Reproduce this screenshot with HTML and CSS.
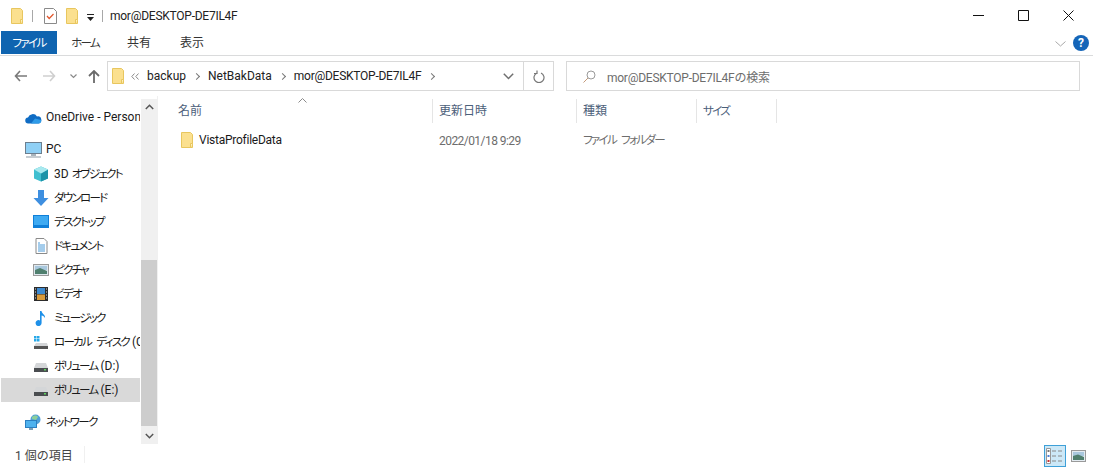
FILE: index.html
```html
<!DOCTYPE html>
<html lang="ja">
<head>
    <meta charset="UTF-8">
    <title>mor@DESKTOP-DE7IL4F</title>
    <link rel="stylesheet" href="styles.css">
</head>
<body>
    <svg class="defs" width="0" height="0">
        <symbol id="folder" viewBox="0 0 12 16">
            <path d="M.5 .5h9l2 2v13H.5z" fill="#fbe08f" stroke="#e8c65e"/>
            <path d="M11.500 11.500h-2v4" fill="#fff3c4" stroke="#e8c65e"/>
        </symbol>
        <symbol id="drive" viewBox="0 0 16 16">
            <path d="M1 10l2-5h10l2 5z" fill="#d4d6d8"/>
            <rect x="1" y="10" width="14" height="4" fill="#4a4d50"/>
            <rect x="11" y="11" width="2" height="1.500" fill="#5fd35f"/>
        </symbol>
    </svg>

    <!-- Title bar -->
    <div class="titlebar">
        <svg class="qa-icon" width="12" height="16"><use href="#folder"/></svg>
        <span class="qa-sep"></span>
        <svg class="qa-check" width="13" height="16" viewBox="0 0 13 16">
            <path d="M.5 .5h9l3 3v12H.5z" fill="#fff" stroke="#8a8a8a"/>
            <path d="M3 8l2.200 2.500L9.500 6" fill="none" stroke="#e2552b" stroke-width="1.200"/>
        </svg>
        <svg class="qa-icon qa-folder2" width="12" height="16"><use href="#folder"/></svg>
        <svg class="qa-drop" width="7" height="7" viewBox="0 0 7 7"><path d="M0 0h7v1H0zM0 3h7L3.500 7z" fill="#222"/></svg>
        <span class="qa-sep qa-sep2"></span>
        <span class="title-text tight">mor@DESKTOP-DE7IL4F</span>
        <div class="window-btns">
            <svg width="11" height="11" viewBox="0 0 11 11"><path d="M0 5.500h11" stroke="#111"/></svg>
            <svg width="11" height="11" viewBox="0 0 11 11"><path d="M.5 .5h10v10H.5z" fill="none" stroke="#111"/></svg>
            <svg width="11" height="11" viewBox="0 0 11 11"><path d="M.5 .5l10 10M10.500 .5l-10 10" stroke="#111"/></svg>
        </div>
    </div>

    <!-- Ribbon tabs -->
    <div class="ribbon">
        <div class="tab tab-file kana">ファイル</div>
        <div class="tab tab-home kana">ホーム</div>
        <div class="tab tab-share">共有</div>
        <div class="tab tab-view">表示</div>
        <svg class="ribbon-chevron" width="11" height="6" viewBox="0 0 11 6"><path d="M.5 .5l5 4.500 5-4.500" fill="none" stroke="#a8a8a8"/></svg>
        <div class="help">?</div>
    </div>

    <!-- Address row -->
    <div class="navrow">
        <div class="nav-btns">
            <svg width="13" height="12" viewBox="0 0 13 12"><path d="M6 1L1.500 6 6 11M1.500 6H13" fill="none" stroke="#7a7a7a" stroke-width="1.600"/></svg>
            <svg class="nav-forward" width="13" height="12" viewBox="0 0 13 12"><path d="M7 1l4.500 5L7 11M11.500 6H0" fill="none" stroke="#cfcfcf" stroke-width="1.600"/></svg>
            <svg class="nav-recent" width="7" height="5" viewBox="0 0 7 5"><path d="M.5 .5l3 3 3-3" fill="none" stroke="#8a8a8a" stroke-width="1.200"/></svg>
            <svg class="nav-up" width="12" height="13" viewBox="0 0 12 13"><path d="M1 6l5-5 5 5M6 1v12" fill="none" stroke="#6a6a6a" stroke-width="1.800"/></svg>
        </div>
        <div class="addressbox">
            <svg class="addr-folder" width="12" height="16"><use href="#folder"/></svg>
            <svg class="crumb-more" width="8" height="7" viewBox="0 0 8 7"><path d="M3.500 .5L.8 3.500l2.700 3M7.500 .5L4.800 3.500l2.700 3" fill="none" stroke="#8a8a8a"/></svg>
            <span class="crumb">backup</span>
            <span class="crumb-sep"></span>
            <span class="crumb">NetBakData</span>
            <span class="crumb-sep"></span>
            <span class="crumb tight">mor@DESKTOP-DE7IL4F</span>
            <span class="crumb-sep"></span>
            <svg class="addr-drop" width="11" height="7" viewBox="0 0 11 7"><path d="M.8 .8l4.700 4.700L10.200 .8" fill="none" stroke="#6f6f6f" stroke-width="1.500"/></svg>
            <div class="addr-refresh">
                <svg width="12" height="13" viewBox="0 0 12 13"><path d="M4 3a5 5 0 1 0 4 0M4 .5V3.500H1" fill="none" stroke="#777" stroke-width="1.200"/></svg>
            </div>
        </div>
        <div class="searchbox">
            <svg width="13" height="13" viewBox="0 0 13 13"><circle cx="8" cy="5" r="4" fill="none" stroke="#9a9a9a"/><path d="M5 8l-4.500 4.500" stroke="#c49a7a"/></svg>
            <span class="tight">mor@DESKTOP-DE7IL4Fの検索</span>
        </div>
    </div>

    <div class="main">
        <!-- Navigation pane -->
        <div class="sidebar">
            <div class="tree">
                <div class="row top">
                    <svg width="17" height="11" viewBox="0 0 17 11"><path d="M3.500 10.500a3 3 0 0 1-.5-6A5 5 0 0 1 12 3.500a3.500 3.500 0 0 1 1.500 7z" fill="#0f6cc4"/><path d="M6 10.500l4-5 6 1.500a2.500 2.500 0 0 1-2 3.500z" fill="#2f9be8"/></svg>
                    <span>OneDrive - Personal</span>
                </div>
                <div class="row top gap">
                    <svg width="17" height="16" viewBox="0 0 17 16"><rect x=".5" y=".5" width="16" height="11" fill="#8fd0f5" stroke="#6c7f8f"/><path d="M6 12h5v2H6z" fill="#a9b4bc"/><path d="M1 15h15" stroke="#8c99a3"/></svg>
                    <span>PC</span>
                </div>
                <div class="row sub">
                    <svg width="16" height="16" viewBox="0 0 16 16"><path d="M8 .5l7 3v9l-7 3-7-3v-9z" fill="#3fbfd0"/><path d="M8 7.500l7-4v9l-7 3z" fill="#1b93a8"/><path d="M8 .5l7 3-7 4-7-4z" fill="#a8e9ef"/></svg>
                    <span>3D <span class="kana">オブジェクト</span></span>
                </div>
                <div class="row sub">
                    <svg width="16" height="16" viewBox="0 0 16 16"><path d="M5 0h6v8h4.500L8 16 .5 8H5z" fill="#3e8fe0"/></svg>
                    <span class="kana">ダウンロード</span>
                </div>
                <div class="row sub">
                    <svg width="16" height="16" viewBox="0 0 16 16"><rect y="1" width="16" height="13" fill="#0f7fd8"/><path d="M1 2h14v9H1z" fill="#3eaaf2"/></svg>
                    <span class="kana">デスクトップ</span>
                </div>
                <div class="row sub">
                    <svg width="16" height="16" viewBox="0 0 16 16"><path d="M3 .5h8l3 3v12H3z" fill="#fff" stroke="#8a8a8a"/><path d="M5 5h2M5 7h7M5 9h7M5 11h7M5 13h7" stroke="#4a9ad8"/></svg>
                    <span class="kana">ドキュメント</span>
                </div>
                <div class="row sub">
                    <svg width="16" height="16" viewBox="0 0 16 16"><rect x=".5" y="2.500" width="15" height="11" fill="#dfe8ee" stroke="#9a9a9a"/><path d="M2 4h12v4H2z" fill="#a9c8de"/><path d="M2 8l5-2 7 3v3H2z" fill="#4f7f6e"/></svg>
                    <span class="kana">ピクチャ</span>
                </div>
                <div class="row sub">
                    <svg width="16" height="16" viewBox="0 0 16 16"><rect x="1" y="1" width="14" height="14" fill="#2c2c2c"/><rect x="4" y="2" width="8" height="6" fill="#3d8ad0"/><rect x="4" y="8.500" width="8" height="5.500" fill="#d99a3a"/><path d="M2 3h1M2 6h1M2 9h1M2 12h1M13 3h1M13 6h1M13 9h1M13 12h1" stroke="#ddd"/></svg>
                    <span class="kana">ビデオ</span>
                </div>
                <div class="row sub">
                    <svg width="16" height="16" viewBox="0 0 16 16"><path d="M7 1h1.500c.5 3 4 3.500 3.500 7-.8-1.500-2-2.300-3.400-2.500V13a3 3 0 1 1-1.600-2.600z" fill="#1e90e8"/></svg>
                    <span class="kana">ミュージック</span>
                </div>
                <div class="row sub">
                    <svg width="16" height="16" viewBox="0 0 16 16"><path d="M1 2h2.500v2.500H1zM4 2h2.500v2.500H4zM1 5h2.500v2.500H1zM4 5h2.500v2.500H4z" fill="#27a8e8"/><path d="M3 9h11l1 3H1z" fill="#d4d6d8"/><rect x="1" y="12" width="14" height="3" fill="#555"/></svg>
                    <span><span class="kana">ローカル ディスク</span> (C:)</span>
                </div>
                <div class="row sub">
                    <svg width="16" height="16"><use href="#drive"/></svg>
                    <span><span class="kana">ボリューム</span> (D:)</span>
                </div>
                <div class="row sub selected">
                    <svg width="16" height="16"><use href="#drive"/></svg>
                    <span><span class="kana">ボリューム</span> (E:)</span>
                </div>
                <div class="row top gap">
                    <svg width="17" height="16" viewBox="0 0 17 16"><circle cx="10.500" cy="5.500" r="5" fill="#4f9fd8"/><path d="M7 3c2-2 5-2 6 0l-2 3-4-1z" fill="#8ccf9a"/><rect x=".5" y="6.500" width="11" height="7" fill="#4fb2ee" stroke="#2c7fc0"/><path d="M4 15h4" stroke="#7f9fb5" stroke-width="2"/></svg>
                    <span class="kana">ネットワーク</span>
                </div>
            </div>
            <div class="scrollbar">
                <svg class="scroll-arrow" width="9" height="6" viewBox="0 0 9 6"><path d="M.8 5L4.500 1.300 8.200 5" fill="none" stroke="#555" stroke-width="1.500"/></svg>
                <div class="scroll-space"></div>
                <div class="scroll-thumb"></div>
                <svg class="scroll-arrow" width="9" height="6" viewBox="0 0 9 6"><path d="M.8 1L4.500 4.700 8.200 1" fill="none" stroke="#555" stroke-width="1.500"/></svg>
            </div>
        </div>

        <!-- File list -->
        <div class="files">
            <div class="file-head">
                <div class="col col-name">名前
                    <svg class="sort-caret" width="9" height="5" viewBox="0 0 9 5"><path d="M.5 4.500l4-4 4 4" fill="none" stroke="#8a8a8a"/></svg>
                </div>
                <div class="col col-date">更新日時</div>
                <div class="col col-type">種類</div>
                <div class="col col-size kana">サイズ</div>
            </div>
            <div class="file-row">
                <div class="cell-name">
                    <svg width="12" height="16"><use href="#folder"/></svg>
                    <span class="tight">VistaProfileData</span>
                </div>
                <div class="cell-date">2022/01/18 9:29</div>
                <div class="cell-type kana">ファイル フォルダー</div>
            </div>
        </div>
    </div>

    <!-- Status bar -->
    <div class="statusbar">
        <span class="status-text">1 個の項目</span>
        <div class="view-btns">
            <div class="view-btn active">
                <svg width="20" height="18" viewBox="0 0 20 18"><path d="M1.500 1.500h4v15h-4z" fill="#fff" stroke="#999"/><rect x="2.500" y="3" width="2" height="2" fill="#777"/><rect x="2.500" y="8" width="2" height="2" fill="#4a7fd8"/><rect x="2.500" y="13" width="2" height="2" fill="#c83030"/><path d="M7 4h4M13 4h4M7 9h4M13 9h4M7 14h4M13 14h4" stroke="#888"/></svg>
            </div>
            <div class="view-btn">
                <svg width="15" height="12" viewBox="0 0 15 12"><rect x=".5" y=".5" width="14" height="11" fill="#e4ecf2" stroke="#9a9a9a"/><path d="M2 2h11v4H2z" fill="#a9c8de"/><path d="M2 6l5-1.500L13 7v3H2z" fill="#4f7f6e"/></svg>
            </div>
        </div>
    </div>
</body>
</html>
```

FILE: styles.css
```css
* {
    box-sizing: border-box;
}

html, body {
    height: 100%;
}

body {
    margin: 0;
    font-family: Roboto, "Noto Sans CJK JP", sans-serif;
    font-size: 12px;
    color: #1a1a1a;
    background-color: #fff;
    overflow: hidden;
}

svg {
    display: block;
    flex: none;
}

.defs {
    position: absolute;
}

/* narrow kana, the screenshot's UI font sets these much tighter than Noto */
.kana {
    font-size: 11.5px;
    font-feature-settings: "palt";
    letter-spacing: -1.7px;
    word-spacing: 4px;
}

.tight {
    letter-spacing: -.25px;
}

/* Title bar */
.titlebar {
    height: 31px;
    display: flex;
    align-items: center;
    padding-left: 11px;
}

.qa-sep {
    width: 1px;
    height: 12px;
    margin-left: 9px;
    background-color: #a8a8a8;
}

.qa-check {
    margin-left: 11px;
}

.qa-folder2 {
    margin-left: 9px;
}

.qa-drop {
    margin-left: 9px;
    margin-top: 3px;
}

.qa-sep2 {
    margin-left: 8px;
}

.title-text {
    margin-left: 7px;
    color: #222;
}

.window-btns {
    margin-left: auto;
    width: 138px;
    display: flex;
    justify-content: space-between;
    padding: 0 19px 0 18px;
}

/* Ribbon */
.ribbon {
    height: 25px;
    display: flex;
    align-items: flex-start;
    padding-left: 1px;
    border-bottom: 1px solid #dadbdc;
}

.tab {
    height: 23px;
    line-height: 25px;
    text-align: center;
    color: #333;
}

.tab-file {
    width: 56px;
    background-color: #0f64b0;
    color: #fff;
}

.tab-home {
    width: 56px;
}

.tab-share {
    width: 52px;
}

.tab-view {
    width: 54px;
}

.ribbon-chevron {
    margin-left: auto;
    margin-top: 10px;
}

.help {
    width: 16px;
    height: 16px;
    margin: 4px 4px 0 7px;
    border-radius: 50%;
    background-color: #1565b8;
    color: #fff;
    font-weight: bold;
    font-size: 12px;
    line-height: 16px;
    text-align: center;
}

/* Address row */
.navrow {
    height: 40px;
    display: flex;
    align-items: flex-start;
    padding: 5px 13px 0 0;
}

.nav-btns {
    width: 107px;
    height: 30px;
    display: flex;
    align-items: center;
    padding-left: 14px;
}

.nav-forward {
    margin-left: 16px;
}

.nav-recent {
    margin-left: 14px;
}

.nav-up {
    margin-left: 11px;
}

.addressbox {
    width: 447px;
    height: 30px;
    display: flex;
    align-items: center;
    border: 1px solid #d9d9d9;
    padding-left: 4px;
    color: #222;
}

.addr-folder {
    margin-right: 7px;
}

.crumb-more {
    margin-right: 8px;
}

.crumb-sep {
    width: 5px;
    height: 5px;
    margin: 0 9px 0 8px;
    border-top: 1px solid #777;
    border-right: 1px solid #777;
    transform: rotate(45deg);
}

.addr-drop {
    margin-left: auto;
    margin-right: 9px;
}

.addr-refresh {
    width: 30px;
    height: 28px;
    display: flex;
    align-items: center;
    justify-content: center;
    border-left: 1px solid #d9d9d9;
}

.searchbox {
    flex: 1;
    height: 30px;
    margin-left: 12px;
    display: flex;
    align-items: center;
    gap: 11px;
    padding-left: 16px;
    border: 1px solid #d9d9d9;
    color: #6d6d6d;
}

/* Main area */
.main {
    height: 348px;
    display: flex;
}

.sidebar {
    width: 158px;
    display: flex;
    flex: none;
    border-right: 1px solid #f0f0f0;
}

.tree {
    width: 141px;
    padding-top: 10px;
    overflow: hidden;
}

.row {
    height: 24px;
    margin-left: 1px;
    display: flex;
    align-items: center;
    white-space: nowrap;
}

.row.top {
    padding-left: 24px;
    gap: 4px;
}

.row.gap {
    margin-top: 8px;
}

.row.sub {
    padding-left: 32px;
    gap: 5px;
}

.row > span {
    margin-bottom: 3px;
}

.row.selected {
    background-color: #d9d9d9;
}

.scrollbar {
    width: 16px;
    margin-left: 1px;
    margin-top: 3px;
    display: flex;
    flex-direction: column;
    align-items: center;
    background-color: #f0f0f0;
}

.scroll-arrow {
    margin: 5px 0;
}

.scroll-space {
    height: 145px;
}

.scroll-thumb {
    width: 100%;
    height: 167px;
    background-color: #cdcdcd;
    margin-bottom: 2px;
}

/* File list */
.files {
    flex: 1;
}

.file-head {
    height: 30px;
    margin-top: 3px;
    display: flex;
}

.col {
    height: 24px;
    line-height: 24px;
    padding-left: 6px;
    border-right: 1px solid #e5e5e5;
    color: #4c607a;
    position: relative;
}

.col-name {
    width: 275px;
    padding-left: 20px;
}

.col-date {
    width: 144px;
}

.col-type {
    width: 120px;
}

.col-size {
    width: 80px;
}

.sort-caret {
    position: absolute;
    top: -1px;
    left: 140px;
}

.file-row {
    height: 22px;
    display: flex;
    align-items: center;
}

.cell-name {
    width: 275px;
    padding-left: 23px;
    display: flex;
    align-items: center;
    gap: 6px;
}

.cell-date {
    width: 144px;
    padding-left: 6px;
    padding-top: 1px;
    letter-spacing: -.55px;
    color: #6d6d6d;
}

.cell-type {
    padding-left: 6px;
    padding-bottom: 2px;
    color: #6d6d6d;
}

/* Status bar */
.statusbar {
    height: 23px;
    display: flex;
    align-items: center;
    padding: 0 1px 0 15px;
}

.status-text {
    color: #444;
    margin-bottom: 2px;
    padding-right: 11px;
    border-right: 1px solid #f0f0f0;
}

.view-btns {
    margin-left: auto;
    display: flex;
    align-items: center;
    gap: 1px;
    margin-right: 3px;
}

.view-btn {
    width: 22px;
    height: 22px;
    display: flex;
    align-items: center;
    justify-content: center;
}

.view-btn.active {
    background-color: #cce8f7;
    border: 1px solid #3ea0d8;
}
```
